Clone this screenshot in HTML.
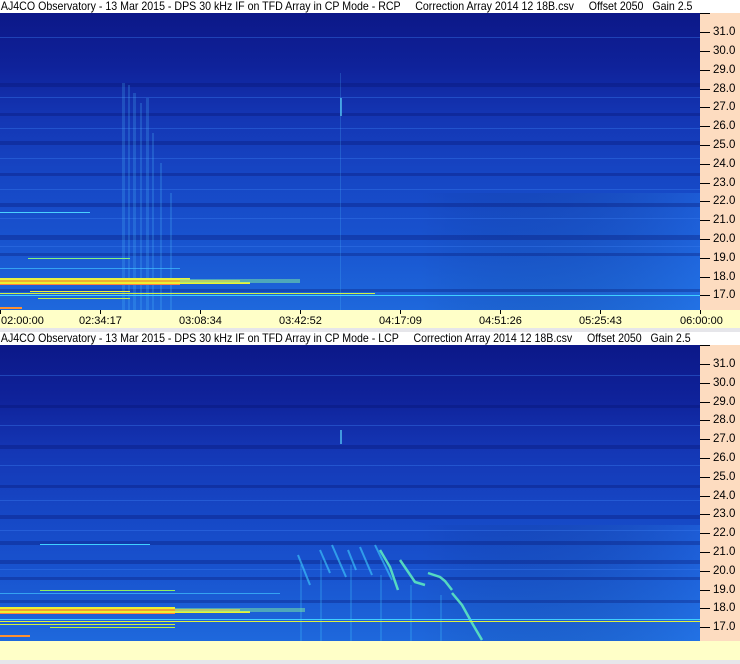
<!DOCTYPE html>
<html><head><meta charset="utf-8"><style>
*{margin:0;padding:0}
body{width:740px;height:664px;position:relative;background:#e6e6ea;overflow:hidden;font-family:"Liberation Sans",sans-serif;font-size:12px;color:#000}
.title{position:absolute;left:0;width:740px;height:13px;background:#fff;line-height:13px}
.title div{white-space:pre;padding-left:1px;transform:scaleX(0.885);transform-origin:0 0;width:820px}
.axis{position:absolute;left:700px;width:40px;background:#fddcc0}
.tl{position:absolute;left:0;width:40px;font-size:11.5px;line-height:12px}
.tl:before{content:"";position:absolute;left:0;top:6px;width:10px;height:1px;background:#000}
.tl span{position:absolute;left:13px}
.tbar{position:absolute;left:0;width:740px;height:18px;background:#ffffc8}
.tk{position:absolute;top:0;width:1px;height:4px;background:#000}
.tt{position:absolute;top:5px;font-size:11px;line-height:12px}
svg{position:absolute;left:0}
</style></head><body>
<div class="title" style="top:0"><div>AJ4CO Observatory - 13 Mar 2015 - DPS 30 kHz IF on TFD Array in CP Mode - RCP     Correction Array 2014 12 18B.csv     Offset 2050   Gain 2.5</div></div>
<div class="axis" style="top:13px;height:297px">
<div style="position:absolute;left:0;top:0;width:10px;height:1px;background:#000"></div>
</div>
<svg style="top:13px" width="700" height="297" viewBox="0 0 700 297">
<defs>
<linearGradient id="g1" x1="0" y1="0" x2="0" y2="1">
<stop offset="0" stop-color="#0c1888"/><stop offset="0.18" stop-color="#0f229a"/><stop offset="0.35" stop-color="#1436b4"/><stop offset="0.55" stop-color="#1646c4"/><stop offset="0.75" stop-color="#1852ce"/><stop offset="1" stop-color="#1e68dc"/>
</linearGradient>
<linearGradient id="gh" x1="0" y1="0" x2="1" y2="0"><stop offset="0" stop-color="#000" stop-opacity="0"/><stop offset="0.6" stop-color="#000" stop-opacity="0"/><stop offset="1" stop-color="#3090ff" stop-opacity="0.25"/></linearGradient>
</defs>
<rect width="700" height="297" fill="url(#g1)"/>
<rect y="180" width="700" height="117" fill="url(#gh)"/>
<g fill="#06106a" opacity="0.3">
<rect y="70" width="700" height="4"/><rect y="100" width="700" height="3"/><rect y="128" width="700" height="4"/><rect y="160" width="700" height="3"/><rect y="190" width="700" height="4"/><rect y="222" width="700" height="5"/><rect y="240" width="700" height="3"/><rect y="276" width="700" height="3"/>
</g>
<g fill="#3a7cf0" opacity="0.4">
<rect y="24" width="700" height="1"/><rect y="84" width="700" height="1"/><rect y="115" width="700" height="1"/><rect y="145" width="700" height="1"/><rect y="176" width="700" height="1"/><rect y="205" width="700" height="1"/><rect y="233" width="700" height="1"/>
</g>
<g fill="#50c0ff" opacity="0.22">
<rect x="122" y="70" width="3" height="227"/><rect x="128" y="72" width="2" height="225"/><rect x="133" y="80" width="3" height="217"/><rect x="140" y="90" width="2" height="207"/><rect x="146" y="85" width="3" height="212"/><rect x="152" y="120" width="2" height="177"/><rect x="160" y="150" width="2" height="147"/><rect x="170" y="180" width="2" height="117"/><rect x="340" y="60" width="1" height="237"/>
</g>
<rect x="340" y="85" width="2" height="18" fill="#60e0ff" opacity="0.6"/>
<g>
<rect x="0" y="199" width="90" height="1" fill="#4ad0ff"/>
<rect x="28" y="245" width="102" height="1" fill="#80f080"/>
<rect x="0" y="255" width="180" height="1" fill="#40c0ff" opacity="0.7"/>
<rect x="0" y="265" width="190" height="2" fill="#e8f040"/>
<rect x="0" y="267" width="240" height="2" fill="#f0b030"/>
<rect x="0" y="269" width="250" height="2" fill="#f0f030"/>
<rect x="0" y="271" width="180" height="1" fill="#ff8040"/>
<rect x="180" y="266" width="120" height="4" fill="#80f0a0" opacity="0.5"/>
<rect x="30" y="278" width="100" height="1" fill="#f0f030"/>
<rect x="0" y="280" width="375" height="1" fill="#d0f040"/>
<rect x="0" y="282" width="700" height="1" fill="#40d0ff"/>
<rect x="38" y="285" width="92" height="1" fill="#c0f040"/>
<rect x="0" y="294" width="22" height="2" fill="#ff9030"/>
</g>
</svg>
<div class="tbar" style="top:310px"></div>
<div style="position:absolute;top:310px;left:0;width:740px;height:20px">
<div class="tk" style="left:0"></div><div class="tk" style="left:100px"></div><div class="tk" style="left:200px"></div><div class="tk" style="left:300px"></div><div class="tk" style="left:400px"></div><div class="tk" style="left:500px"></div><div class="tk" style="left:600px"></div><div class="tk" style="left:700px"></div>
<div class="tt" style="left:1px">02:00:00</div><div class="tt" style="left:79px">02:34:17</div><div class="tt" style="left:179px">03:08:34</div><div class="tt" style="left:279px">03:42:52</div><div class="tt" style="left:379px">04:17:09</div><div class="tt" style="left:479px">04:51:26</div><div class="tt" style="left:579px">05:25:43</div><div class="tt" style="left:680px">06:00:00</div>
</div>
<div class="title" style="top:332px"><div>AJ4CO Observatory - 13 Mar 2015 - DPS 30 kHz IF on TFD Array in CP Mode - LCP     Correction Array 2014 12 18B.csv     Offset 2050   Gain 2.5</div></div>
<div class="axis" style="top:345px;height:296px">
<div style="position:absolute;left:0;top:0;width:10px;height:1px;background:#000"></div>
</div>
<svg style="top:345px" width="700" height="296" viewBox="0 0 700 296">
<rect width="700" height="296" fill="url(#g1)"/>
<rect y="180" width="700" height="116" fill="url(#gh)"/>
<g fill="#06106a" opacity="0.3">
<rect y="60" width="700" height="3"/><rect y="100" width="700" height="4"/><rect y="140" width="700" height="3"/><rect y="170" width="700" height="4"/><rect y="196" width="700" height="4"/><rect y="215" width="700" height="4"/><rect y="232" width="700" height="3"/><rect y="255" width="700" height="3"/>
</g>
<g fill="#3a7cf0" opacity="0.4">
<rect y="30" width="700" height="1"/><rect y="80" width="700" height="1"/><rect y="120" width="700" height="1"/><rect y="155" width="700" height="1"/><rect y="185" width="700" height="1"/><rect y="224" width="700" height="1"/>
</g>
<rect x="340" y="85" width="2" height="14" fill="#60e0ff" opacity="0.6"/>
<g stroke="#40d0ff" stroke-width="2" opacity="0.6" fill="none">
<path d="M298 210 L310 240"/><path d="M320 205 L330 228"/><path d="M332 200 L346 232"/><path d="M348 205 L356 225"/><path d="M360 202 L372 230"/><path d="M375 200 L392 235"/>
</g>
<g stroke="#60f0c0" stroke-width="2.5" fill="none" opacity="0.85">
<path d="M380 205 L390 222 L398 245"/><path d="M400 215 L415 237 L425 240"/><path d="M428 228 L440 232 L445 236 L452 245"/><path d="M452 248 L462 260 L472 278 L482 295"/>
</g>
<g fill="#40c0ff" opacity="0.25">
<rect x="300" y="220" width="2" height="76"/><rect x="320" y="215" width="2" height="81"/><rect x="350" y="220" width="2" height="76"/><rect x="380" y="230" width="2" height="66"/><rect x="410" y="240" width="2" height="56"/><rect x="440" y="250" width="2" height="46"/>
</g>
<g>
<rect x="40" y="199" width="110" height="1" fill="#40d0ff"/>
<rect x="40" y="245" width="135" height="1" fill="#90f060"/>
<rect x="0" y="248" width="280" height="1" fill="#40c0ff" opacity="0.7"/>
<rect x="0" y="262" width="175" height="2" fill="#f0f030"/>
<rect x="0" y="264" width="240" height="2" fill="#f0a030"/>
<rect x="0" y="266" width="250" height="2" fill="#f0f030"/>
<rect x="0" y="268" width="175" height="1" fill="#ff8040"/>
<rect x="175" y="263" width="130" height="4" fill="#80f0a0" opacity="0.5"/>
<rect x="0" y="274" width="700" height="1" fill="#40d0ff"/>
<rect x="0" y="276" width="700" height="1" fill="#e0f040"/>
<rect x="0" y="279" width="175" height="1" fill="#d0f040"/>
<rect x="50" y="282" width="125" height="1" fill="#c0f040"/>
<rect x="0" y="290" width="30" height="2" fill="#ff9030"/>
</g>
</svg>
<div class="tbar" style="top:641px;height:19px"></div>
<div style="position:absolute;left:700px;top:0;width:40px;height:664px">
<div class="tl" style="top:26px"><span>31.0</span></div>
<div class="tl" style="top:45px"><span>30.0</span></div>
<div class="tl" style="top:64px"><span>29.0</span></div>
<div class="tl" style="top:83px"><span>28.0</span></div>
<div class="tl" style="top:101px"><span>27.0</span></div>
<div class="tl" style="top:120px"><span>26.0</span></div>
<div class="tl" style="top:139px"><span>25.0</span></div>
<div class="tl" style="top:158px"><span>24.0</span></div>
<div class="tl" style="top:177px"><span>23.0</span></div>
<div class="tl" style="top:195px"><span>22.0</span></div>
<div class="tl" style="top:214px"><span>21.0</span></div>
<div class="tl" style="top:233px"><span>20.0</span></div>
<div class="tl" style="top:252px"><span>19.0</span></div>
<div class="tl" style="top:271px"><span>18.0</span></div>
<div class="tl" style="top:289px"><span>17.0</span></div>
<div class="tl" style="top:358px"><span>31.0</span></div>
<div class="tl" style="top:377px"><span>30.0</span></div>
<div class="tl" style="top:396px"><span>29.0</span></div>
<div class="tl" style="top:414px"><span>28.0</span></div>
<div class="tl" style="top:433px"><span>27.0</span></div>
<div class="tl" style="top:452px"><span>26.0</span></div>
<div class="tl" style="top:471px"><span>25.0</span></div>
<div class="tl" style="top:490px"><span>24.0</span></div>
<div class="tl" style="top:508px"><span>23.0</span></div>
<div class="tl" style="top:527px"><span>22.0</span></div>
<div class="tl" style="top:546px"><span>21.0</span></div>
<div class="tl" style="top:565px"><span>20.0</span></div>
<div class="tl" style="top:584px"><span>19.0</span></div>
<div class="tl" style="top:602px"><span>18.0</span></div>
<div class="tl" style="top:621px"><span>17.0</span></div>
</div>
</body></html>
